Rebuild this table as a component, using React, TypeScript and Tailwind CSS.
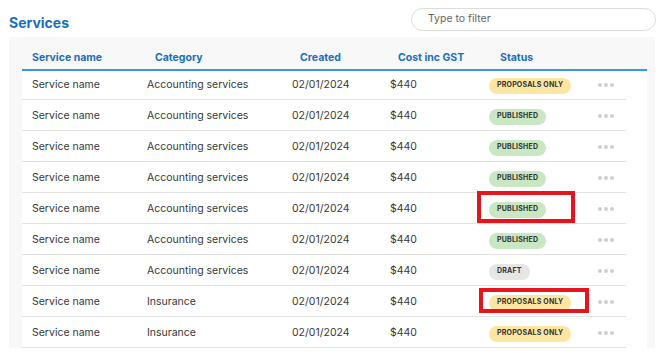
import React from "react";

type Status = "PROPOSALS ONLY" | "PUBLISHED" | "DRAFT";

const rows: { name: string; category: string; status: Status; mark?: "a" | "b" }[] = [
  { name: "Service name", category: "Accounting services", status: "PROPOSALS ONLY" },
  { name: "Service name", category: "Accounting services", status: "PUBLISHED" },
  { name: "Service name", category: "Accounting services", status: "PUBLISHED" },
  { name: "Service name", category: "Accounting services", status: "PUBLISHED" },
  { name: "Service name", category: "Accounting services", status: "PUBLISHED", mark: "a" },
  { name: "Service name", category: "Accounting services", status: "PUBLISHED" },
  { name: "Service name", category: "Accounting services", status: "DRAFT" },
  { name: "Service name", category: "Insurance", status: "PROPOSALS ONLY", mark: "b" },
  { name: "Service name", category: "Insurance", status: "PROPOSALS ONLY" },
];

function Badge({ status }: { status: Status }) {
  const cls =
    status === "PUBLISHED"
      ? "bg-[#c9e7c3]"
      : status === "DRAFT"
      ? "bg-[#e6e6e6]"
      : "bg-[#fde6a2]";
  return (
    <span
      className={`${cls} inline-flex h-[16px] items-center rounded-full px-[8px] text-[7px] font-bold tracking-[0.2px] text-[#333]`}
    >
      {status}
    </span>
  );
}

function Dots() {
  return (
    <span className="flex gap-[2px]">
      <span className="h-[4px] w-[4px] rounded-full bg-[#cfcfcf]" />
      <span className="h-[4px] w-[4px] rounded-full bg-[#cfcfcf]" />
      <span className="h-[4px] w-[4px] rounded-full bg-[#cfcfcf]" />
    </span>
  );
}

export default function App() {
  return (
    <div
      className="relative h-[352px] w-[666px] overflow-hidden bg-white"
      style={{ fontFamily: "Inter, 'Noto Sans', sans-serif" }}
    >
      <div className="flex h-[37px] items-center">
        <h1 className="ml-[9px] mt-[8px] text-[14px] font-bold text-[#1a6fbd]">Services</h1>
        <div className="ml-auto mr-[10px] mt-[1px] flex h-[23px] w-[245px] items-center rounded-full border border-[#dcdcdc] pl-[16px] text-[10.5px] text-[#666]">
          Type to filter
        </div>
      </div>
      <div className="ml-[9px] w-[646px] bg-[#f8f8f8] pl-[13px] pr-[8px]">
        <div className="flex h-[32px] items-center pl-[10px] pt-[9px] text-[10.5px] font-bold text-[#1a6fbd]">
          <div className="w-[123px]">Service name</div>
          <div className="w-[145px]">Category</div>
          <div className="w-[98px]">Created</div>
          <div className="w-[102px]">Cost inc GST</div>
          <div>Status</div>
        </div>
        <div className="h-[2px] bg-[#3b95e6]" />
        <div className="bg-white">
          {rows.map((r, i) => (
            <div
              key={i}
              className={`relative flex ${i === 0 ? "h-[29px]" : "h-[31px] pt-[2px]"} w-[604px] items-center border-b border-[#e2e2e2] pl-[10px] text-[10.5px] text-[#383838]`}
            >
              <div className="w-[115px]">{r.name}</div>
              <div className="w-[145px]">{r.category}</div>
              <div className="w-[98px]">02/01/2024</div>
              <div className="w-[99px]">$440</div>
              <div className="w-[109px]">
                <Badge status={r.status} />
              </div>
              <Dots />
              {r.mark === "a" && (
                <div className="absolute left-[455px] top-[-2px] h-[32px] w-[98px] border-[4px] border-[#e8141c]" />
              )}
              {r.mark === "b" && (
                <div className="absolute left-[457px] top-[2px] h-[25px] w-[110px] border-[4px] border-[#e8141c]" />
              )}
            </div>
          ))}
        </div>
      </div>
    </div>
  );
}
